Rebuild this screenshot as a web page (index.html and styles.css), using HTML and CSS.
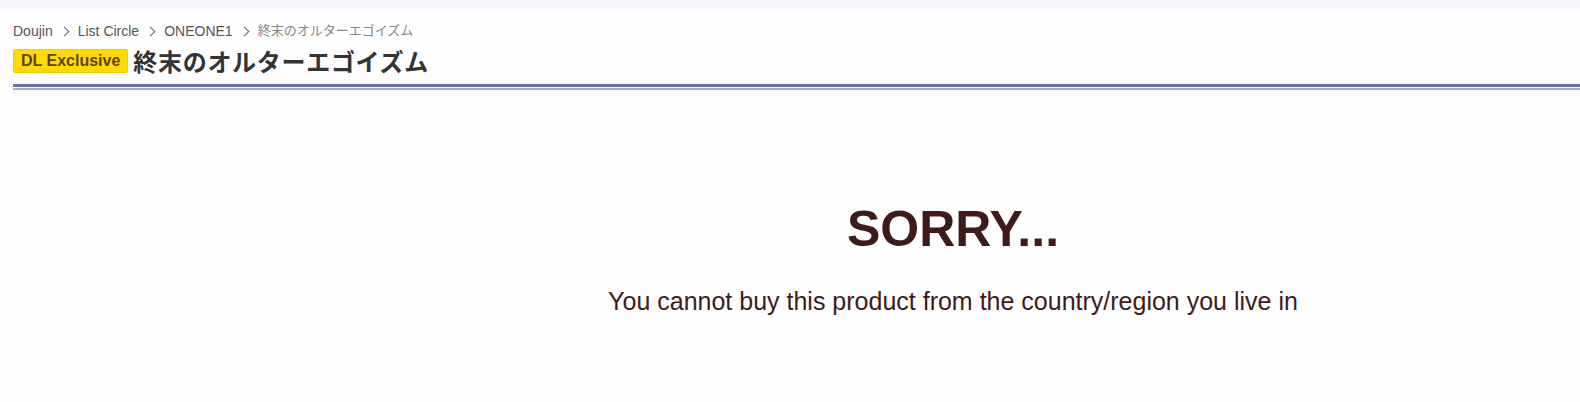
FILE: index.html
```html
<!DOCTYPE html>
<html lang="en">
<head>
    <meta charset="UTF-8">
    <title>終末のオルターエゴイズム</title>
    <link rel="stylesheet" href="styles.css">
</head>
<body>

    <div class="topbar"></div>

    <div id="wrapper">
        <div class="work-header">
            <ul class="topicpath">
                <li><a href="#">Doujin</a></li>
                <li><a href="#">List Circle</a></li>
                <li><a href="#">ONEONE1</a></li>
                <li class="current">終末のオルターエゴイズム</li>
            </ul>
            <h1 class="work-name">
                <span class="badge">DL Exclusive</span>
                <span>終末のオルターエゴイズム</span>
            </h1>
        </div>

        <div class="error-box">
            <p class="error-title">SORRY...</p>
            <p class="error-text">You cannot buy this product from the country/region you live in</p>
        </div>
    </div>

</body>
</html>
```

FILE: styles.css
```css
html {
    overflow: hidden;
}

body {
    font-family: "Liberation Sans", Arial, "Noto Sans CJK JP", sans-serif;
    background-color: #fefefe;
    margin: 0;
    padding: 0;
    min-width: 1906px;
}

.topbar {
    height: 9px;
    background-color: #f7f7fc;
}

#wrapper {
    padding: 0 13px;
}

.work-header {
    padding-top: 12px;
    padding-bottom: 8px;
    border-bottom: 3px solid #66739c;
    box-shadow: 0 1px 0 #fefefe, 0 3px 0 #a6aecb;
}

.topicpath {
    list-style: none;
    margin: 0;
    padding: 0;
    display: flex;
    align-items: center;
    font-size: 14px;
    line-height: 20px;
}

.topicpath li {
    display: flex;
    align-items: center;
}

.topicpath li + li::before {
    content: "";
    width: 6px;
    height: 6px;
    border-top: 1px solid #666;
    border-right: 1px solid #666;
    transform: rotate(45deg);
    margin: 0 10px 0 8px;
}

.topicpath a {
    color: #555;
    text-decoration: none;
}

.topicpath .current {
    color: #888;
    font-size: 13px;
}

.work-name {
    display: flex;
    align-items: center;
    gap: 5px;
    margin: 5px 0 0;
    font-size: 24px;
    letter-spacing: 0.7px;
    line-height: 30px;
    color: #333;
    font-family: "Noto Sans CJK JP", "Liberation Sans", sans-serif;
}

.badge {
    font-family: "Liberation Sans", Arial, sans-serif;
    letter-spacing: 0;
    background-color: #ffdc00;
    color: #5a4300;
    font-size: 16px;
    line-height: 22px;
    padding: 0 7px;
    border-radius: 2px;
    border: 1px solid #f0cc00;
}

.error-box {
    text-align: center;
    color: #3f1a1a;
    padding-top: 113px;
}

.error-title {
    font-size: 50px;
    font-weight: bold;
    line-height: 58px;
    margin: 0;
}

.error-text {
    font-size: 25px;
    line-height: 30px;
    margin: 28px 0 0;
}
```
